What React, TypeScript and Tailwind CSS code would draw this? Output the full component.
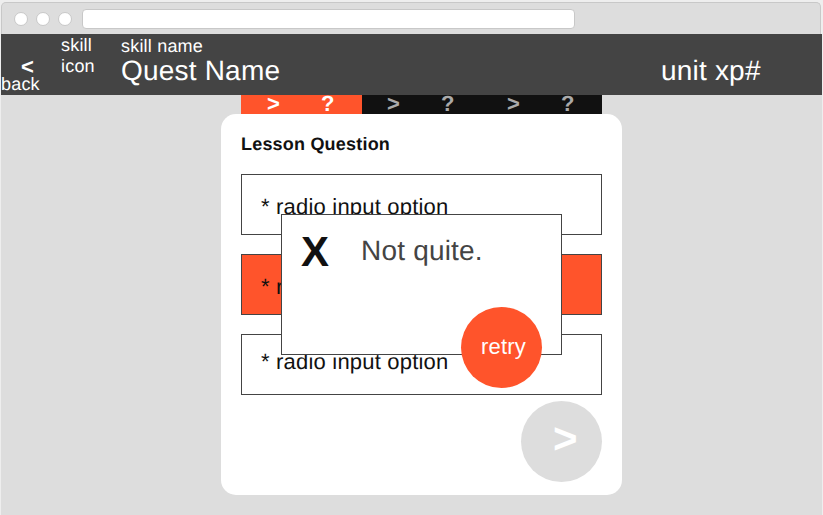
import React from "react";

function BrowserBar() {
  return (
    <div className="mr-px flex h-8 items-start rounded-t-[5px] border border-b-0 border-[#c8c8c8] bg-[#dddddd] pt-[6px] pl-3">
      <div className="flex gap-2 pt-[3px]">
        {[0, 1, 2].map((dot) => (
          <span key={dot} className="size-[14px] rounded-full border border-[#c8c8c8] bg-white" />
        ))}
      </div>
      <div className="ml-[10px] h-5 w-[493px] rounded-[4px] border border-[#c8c8c8] bg-white" />
    </div>
  );
}

function Header() {
  return (
    <header className="flex h-[61px] bg-[#444444] text-white">
      <div className="w-[60px] pt-[23px]">
        <div className="h-[17px] pl-5 text-[22px] leading-5 font-bold">&lt;</div>
        <div className="text-lg leading-5">back</div>
      </div>
      <div className="w-[60px] pt-px text-lg leading-[21px]">
        <div>skill</div>
        <div>icon</div>
      </div>
      <div className="w-[540px] pt-[2px]">
        <div className="text-lg leading-5">skill name</div>
        <div className="text-[28px] leading-[30px]">Quest Name</div>
      </div>
      <div className="pt-5 text-[28px] leading-[34px]">unit xp#</div>
    </header>
  );
}

function Steps() {
  return (
    <nav className="ml-60 flex h-[19px] w-[361px] text-[22px] leading-[18px] font-bold">
      {[true, false, false].map((active, index) => (
        <div
          key={index}
          className={
            active
              ? "flex w-[121px] shrink-0 bg-[#ff542b] pl-[26px] text-white"
              : "flex w-[120px] shrink-0 bg-[#111111] pl-[25px] text-[#aaaaaa]"
          }
        >
          <span className="w-[54px]">&gt;</span>
          <span>?</span>
        </div>
      ))}
    </nav>
  );
}

const options = [
  "bg-white pt-5",
  "bg-[#ff542b] pt-5",
  "bg-white pt-[15px]",
];

function Feedback() {
  return (
    <div className="absolute top-[100px] left-[60px] flex h-[141px] w-[281px] border border-[#444444] bg-white pl-[19px]">
      <span className="w-[60px] pt-[13px] text-[42px] leading-[48px] font-bold">X</span>
      <span className="pt-[19px] text-[28px] leading-[34px] text-[#444444]">Not quite.</span>
      <button className="absolute top-[92px] left-[179px] size-[81px] rounded-full bg-[#ff542b] pb-[2px] pl-5 text-left text-[22px] leading-6 text-white">
        retry
      </button>
    </div>
  );
}

function LessonCard() {
  return (
    <main className="relative ml-[220px] h-[381px] w-[401px] rounded-[15px] bg-white px-5 pt-5">
      <h1 className="h-10 text-lg leading-5 font-bold">Lesson Question</h1>
      <div className="flex flex-col gap-[19px]">
        {options.map((style, index) => (
          <div
            key={index}
            className={`h-[61px] border border-[#444444] pl-[19px] text-[22px] leading-6 ${style}`}
          >
            * radio input option
          </div>
        ))}
      </div>
      <button className="mt-[6px] ml-auto block size-[81px] rounded-full bg-[#dddddd] pb-[5px] pl-8 text-left text-[42px] leading-[48px] font-bold text-white">
        &gt;
      </button>
      <Feedback />
    </main>
  );
}

export default function App() {
  return (
    <div className="h-[515px] overflow-hidden bg-[#eeeeee] pt-[2px] pr-px pl-px font-['Liberation_Sans',Arial,sans-serif] tracking-[0.2px] text-[#111111] [text-rendering:geometricPrecision]">
      <BrowserBar />
      <Header />
      <div className="h-[420px] bg-[#dddddd]">
        <Steps />
        <LessonCard />
      </div>
    </div>
  );
}
